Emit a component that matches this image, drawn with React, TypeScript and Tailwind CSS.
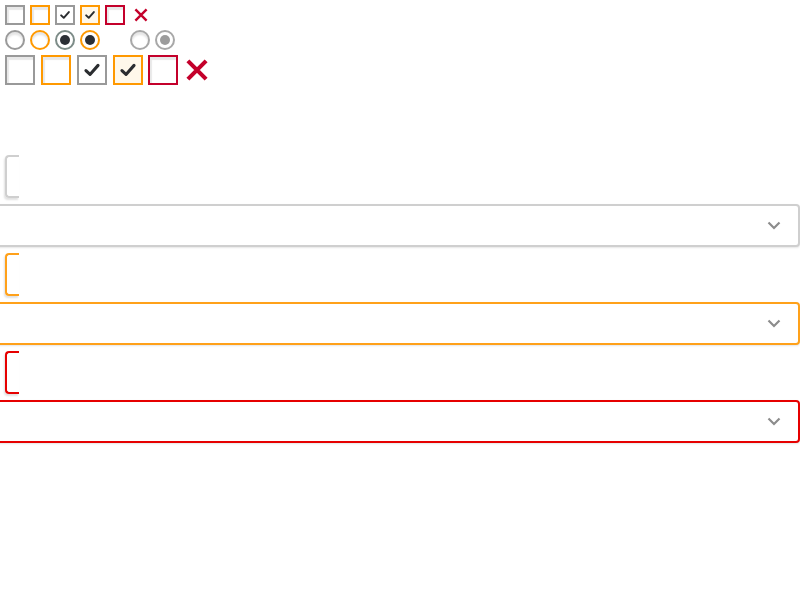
import { ReactNode } from "react";

type Tone = "gray" | "orange" | "red";

const boxBorder: Record<Tone, string> = {
  gray: "border-[#999999]",
  orange: "border-[#ff9900]",
  red: "border-[#c4002b]",
};

const fieldBorder: Record<Tone, string> = {
  gray: "border-[#cfcfcf]",
  orange: "border-[#ffa11a]",
  red: "border-[#e60000]",
};

const Check = ({ size }: { size: number }) => (
  <svg width={size} height={size} viewBox="0 0 20 20" fill="none">
    <path
      d="M4.5 10.5 L8.2 14 L15.5 5.8"
      stroke="#2b2d30"
      strokeWidth="2.8"
      strokeLinecap="round"
      strokeLinejoin="round"
    />
  </svg>
);

const Cross = ({ size, weight }: { size: number; weight: number }) => (
  <svg width={size} height={size} viewBox="0 0 20 20" fill="none">
    <path d="M3 3 L17 17 M17 3 L3 17" stroke="#c4002b" strokeWidth={weight} />
  </svg>
);

const Box = ({
  tone,
  checked,
  big,
}: {
  tone: Tone;
  checked?: boolean;
  big?: boolean;
}) => (
  <div
    className={`flex items-center justify-center border-2 ${boxBorder[tone]} ${
      big ? "w-[30px] h-[30px]" : "w-[20px] h-[20px]"
    } ${
      checked
        ? tone === "orange"
          ? "bg-[#fff8ea]"
          : "bg-white"
        : "bg-white shadow-[inset_2px_3px_1px_rgba(0,0,0,0.09)]"
    }`}
  >
    {checked && <Check size={big ? 22 : 14} />}
  </div>
);

const Radio = ({
  ring,
  dot,
}: {
  ring: string;
  dot?: string;
}) => (
  <div
    className={`flex items-center justify-center w-[20px] h-[20px] rounded-full border-2 ${ring} bg-white ${
      dot ? "" : "shadow-[inset_0_3px_2px_rgba(0,0,0,0.1)]"
    }`}
  >
    {dot && <div className={`w-[10px] h-[10px] rounded-full ${dot}`} />}
  </div>
);

const Field = ({ tone }: { tone: Tone }) => (
  <div
    className={`w-[14px] h-[43px] border-l-2 border-y-2 rounded-l-[4px] ${fieldBorder[tone]} shadow-[-1px_2px_2px_rgba(0,0,0,0.12)]`}
  />
);

const Select = ({ tone }: { tone: Tone }) => (
  <div
    className={`-ml-[15px] -mr-[5px] h-[43px] border-2 rounded-[4px] ${fieldBorder[tone]} bg-white flex items-center justify-end pr-[17px] shadow-[0_1px_2px_rgba(0,0,0,0.1)]`}
  >
    <svg width="14" height="9" viewBox="0 0 14 9" fill="none">
      <path d="M1.5 1.5 L7 7 L12.5 1.5" stroke="#8c8c8c" strokeWidth="2.2" />
    </svg>
  </div>
);

const Row = ({ children, className }: { children: ReactNode; className?: string }) => (
  <div className={`flex items-center ${className ?? ""}`}>{children}</div>
);

export default function App() {
  return (
    <div className="min-h-[600px] bg-white p-[5px] font-['Liberation_Sans',sans-serif] overflow-hidden">
      <Row className="gap-[5px] h-[20px]">
        <Box tone="gray" />
        <Box tone="orange" />
        <Box tone="gray" checked />
        <Box tone="orange" checked />
        <Box tone="red" />
        <div className="ml-[3px]">
          <Cross size={16} weight={3} />
        </div>
      </Row>

      <Row className="gap-[5px] h-[20px] mt-[5px]">
        <Radio ring="border-[#9a9a9a]" />
        <Radio ring="border-[#ff9900]" />
        <Radio ring="border-[#7d8c88]" dot="bg-[#2b2f35]" />
        <Radio ring="border-[#ff9900]" dot="bg-[#2b2f35]" />
        <div className="w-[20px]" />
        <Radio ring="border-[#a8a8a8]" />
        <Radio ring="border-[#a8a8a8]" dot="bg-[#9c9c9c]" />
      </Row>

      <Row className="gap-[6px] h-[30px] mt-[5px]">
        <Box tone="gray" big />
        <Box tone="orange" big />
        <Box tone="gray" checked big />
        <Box tone="orange" checked big />
        <div className="-ml-[1px]">
          <Box tone="red" big />
        </div>
        <div>
          <Cross size={26} weight={3.2} />
        </div>
      </Row>

      <div className="mt-[70px] flex flex-col gap-[6px]">
        <Field tone="gray" />
        <Select tone="gray" />
        <Field tone="orange" />
        <Select tone="orange" />
        <Field tone="red" />
        <Select tone="red" />
      </div>
    </div>
  );
}
